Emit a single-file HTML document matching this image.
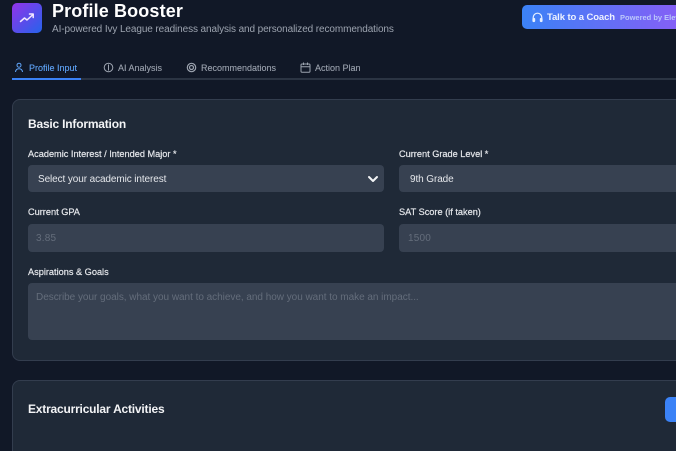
<!DOCTYPE html>
<html><head><meta charset="utf-8"><style>
html,body{margin:0;padding:0;width:676px;height:451px;overflow:hidden;background:#111827}
#r{position:relative;width:676px;height:451px;overflow:hidden;background:#111827;font-family:"Liberation Sans",sans-serif;filter:blur(.35px)}
#r>*{position:absolute;white-space:nowrap}
.lab{font-size:9.2px;color:#e5e7eb;line-height:12px;-webkit-text-stroke:.2px #e5e7eb}
.tab{font-size:9px;line-height:12px;color:#9ca3af;top:61.500px;-webkit-text-stroke:.1px currentColor}
.fld{background:#374151;border-radius:4px}
.ph{font-size:10px;line-height:12px;color:#646d7b;letter-spacing:-.03px}
.val{font-size:10px;line-height:12px;color:#e5e7eb;letter-spacing:-.1px}
.card{background:#1f2937;border:1px solid #333d4e;border-radius:8px;box-sizing:border-box}
.h{font-size:12px;font-weight:bold;color:#f3f4f6;line-height:16px;letter-spacing:-.2px}
</style></head><body><div id="r">
<div style="left:12px;top:3px;width:30px;height:30px;border-radius:5px;background:linear-gradient(135deg,#9333ea,#2563eb)"></div>
<svg style="left:19px;top:11px" width="16" height="14" viewBox="0 0 16 14" fill="none" stroke="#f3e8ff" stroke-width="1.5" stroke-linecap="round" stroke-linejoin="round"><path d="M1.500 10.500 5.500 7 8 9 14 3.500"/><path d="M10.500 3H14.200V6.500"/></svg>
<div style="left:52px;top:-1.500px;font-size:18px;font-weight:bold;line-height:24px;color:#fff;letter-spacing:.13px">Profile Booster</div>
<div style="left:52px;top:23px;font-size:10px;line-height:13px;color:#9ca3af;letter-spacing:-.1px">AI-powered Ivy League readiness analysis and personalized recommendations</div>

<div style="left:522px;top:5px;width:170px;height:24px;border-radius:5px;background:linear-gradient(90deg,#3b82f6,#8b5cf6)"></div>
<svg style="left:532px;top:12px" width="11" height="11" viewBox="0 0 11 11" fill="none" stroke="#e5efff" stroke-width="1.2"><path d="M1.200 8V5.500a4.300 4.300 0 0 1 8.600 0V8"/><rect x="1" y="6.500" width="1.600" height="3" rx=".7" fill="#e5efff"/><rect x="8.400" y="6.500" width="1.600" height="3" rx=".7" fill="#e5efff"/></svg>
<div style="left:547px;top:10.500px;font-size:9.500px;font-weight:bold;line-height:13px;color:#eef2ff;letter-spacing:-.1px">Talk to a Coach</div>
<div style="left:620px;top:12px;font-size:7.500px;line-height:11px;color:#bcc8fb;font-weight:bold">Powered by Eleven</div>

<div style="left:12px;top:78px;width:664px;height:1.500px;background:#2b3443"></div>
<div style="left:12px;top:78px;width:69px;height:2px;background:#3b82f6"></div>
<svg style="left:14px;top:62px" width="10" height="11" viewBox="0 0 10 11" fill="none" stroke="#60a5fa" stroke-width="1"><circle cx="5" cy="3.200" r="2"/><path d="M1.500 10c.3-2.500 1.800-3.200 3.500-3.200S8.200 7.500 8.500 10"/></svg>
<div class="tab" style="left:29px;color:#60a5fa">Profile Input</div>
<svg style="left:103px;top:62px" width="11" height="11" viewBox="0 0 11 11" fill="none" stroke="#9ca3af" stroke-width="1"><circle cx="5.500" cy="5.500" r="4.300"/><path d="M5.500 2.500V8.500"/></svg>
<div class="tab" style="left:118px">AI Analysis</div>
<svg style="left:185.500px;top:62px" width="11" height="11" viewBox="0 0 11 11" fill="none" stroke="#9ca3af" stroke-width="1.200"><circle cx="5.500" cy="5.500" r="4.200"/><circle cx="5.500" cy="5.500" r="2"/></svg>
<div class="tab" style="left:201px">Recommendations</div>
<svg style="left:300px;top:62px" width="11" height="11" viewBox="0 0 11 11" fill="none" stroke="#9ca3af" stroke-width="1"><rect x="1" y="2" width="9" height="8.300" rx="1"/><path d="M1 4.800H10M3.500 .5V3M7.500 .5V3"/></svg>
<div class="tab" style="left:315px">Action Plan</div>

<div class="card" style="left:12px;top:99px;width:700px;height:262px"></div>
<div class="h" style="left:28px;top:116px">Basic Information</div>
<div class="lab" style="left:28px;top:148px">Academic Interest / Intended Major *</div>
<div class="lab" style="left:399px;top:148px">Current Grade Level *</div>
<div class="fld" style="left:28px;top:165px;width:356px;height:27px"></div>
<div class="val" style="left:38px;top:173.500px">Select your academic interest</div>
<svg style="left:367px;top:175px" width="12" height="8" viewBox="0 0 12 8" fill="none" stroke="#f3f4f6" stroke-width="2" stroke-linecap="round" stroke-linejoin="round"><path d="M2 2 6 6 10 2"/></svg>
<div class="fld" style="left:399px;top:165px;width:300px;height:27px"></div>
<div class="val" style="left:410px;top:173.500px">9th Grade</div>
<div class="lab" style="left:28px;top:206px">Current GPA</div>
<div class="lab" style="left:399px;top:206px">SAT Score (if taken)</div>
<div class="fld" style="left:28px;top:224px;width:356px;height:28px"></div>
<div class="ph" style="left:36px;top:232.500px;letter-spacing:.2px">3.85</div>
<div class="fld" style="left:399px;top:224px;width:300px;height:28px"></div>
<div class="ph" style="left:408px;top:232.500px;letter-spacing:.2px">1500</div>
<div class="lab" style="left:28px;top:266px">Aspirations &amp; Goals</div>
<div class="fld" style="left:28px;top:283px;width:680px;height:57px"></div>
<div class="ph" style="left:36px;top:291.500px">Describe your goals, what you want to achieve, and how you want to make an impact...</div>

<div class="card" style="left:12px;top:380px;width:700px;height:100px"></div>
<div class="h" style="left:28px;top:401px">Extracurricular Activities</div>
<div style="left:665px;top:397px;width:30px;height:25px;border-radius:5px;background:#3b82f6"></div>
</div></body></html>
